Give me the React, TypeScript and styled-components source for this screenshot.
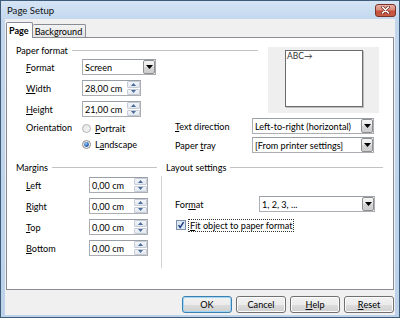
import React from "react";
import styled, { createGlobalStyle } from "styled-components";

const Global = createGlobalStyle`
  html, body { margin: 0; padding: 0; background: #ffffff; }
  body {
    font-family: Lato, "Noto Sans", "DejaVu Sans", sans-serif;
    font-size: 9.1px;
    color: #000;
  }
  * { box-sizing: border-box; }
  #root { width: 400px; height: 319px; }
`;

const Window = styled.div`
  width: 400px;
  height: 318px;
  border: 1px solid #3e5b7a;
  background: linear-gradient(to bottom, #d6e5f5 0px, #c2d7ee 19px, #bcd2ea 100%);
  display: flex;
  flex-direction: column;
  padding: 0 4px 2px 4px;
`;

const TitleBar = styled.div`
  height: 18px;
  display: flex;
  align-items: center;
  justify-content: space-between;
  padding-left: 2px;
`;

const Title = styled.span`
  font-size: 9.6px;
  color: #111;
`;

const CloseBtn = styled.div`
  width: 21px;
  height: 13px;
  margin-right: -1px;
  border: 1px solid #7a3328;
  border-radius: 3px;
  background: linear-gradient(to bottom, #e9b2a6 0%, #d98a79 45%, #c7503b 55%, #c65c45 100%);
  display: flex;
  align-items: center;
  justify-content: center;
`;

const Client = styled.div`
  flex: 1;
  background: #f0f0f0;
  display: flex;
  flex-direction: column;
  padding: 3px 1px 2px 1px;
`;

const TabStrip = styled.div`
  height: 15px;
  display: flex;
  align-items: flex-end;
`;

const Tab = styled.div<{ $active?: boolean }>`
  height: ${(p) => (p.$active ? 16 : 13)}px;
  margin-bottom: ${(p) => (p.$active ? -1 : 0)}px;
  padding: 0 ${(p) => (p.$active ? 3 : 3)}px 0 2px;
  border: 1px solid #898c95;
  border-bottom: none;
  border-left: ${(p) => (p.$active ? "1px solid #898c95" : "none")};
  border-radius: 2px 2px 0 0;
  background: ${(p) =>
    p.$active ? "#ffffff" : "linear-gradient(to bottom, #f3f3f3, #e4e4e4)"};
  font-weight: ${(p) => (p.$active ? 700 : 400)};
  display: flex;
  align-items: center;
  position: relative;
  z-index: ${(p) => (p.$active ? 1 : 0)};
`;

const Panel = styled.div`
  flex: 1;
  border: 1px solid #898c95;
  background: #ffffff;
  padding: 6px 9px 0 9px;
  display: flex;
  flex-direction: column;
`;

const TopRow = styled.div`
  display: flex;
  align-items: flex-start;
`;

const LeftCol = styled.div`
  width: 252px;
  display: flex;
  flex-direction: column;
`;

const SectionHead = styled.div<{ $w: number; $indent?: number }>`
  width: ${(p) => p.$w}px;
  height: 12px;
  padding-left: ${(p) => p.$indent ?? 0}px;
  display: flex;
  align-items: center;
  gap: 4px;
  white-space: nowrap;
  &::after {
    content: "";
    flex: 1;
    height: 1px;
    background: #c3c3c3;
  }
`;

const FormRow = styled.div<{ $mt: number; $indent?: number }>`
  display: flex;
  align-items: center;
  height: 16px;
  margin-top: ${(p) => p.$mt}px;
  padding-left: ${(p) => p.$indent ?? 10}px;
`;

const Label = styled.span<{ $w: number }>`
  width: ${(p) => p.$w}px;
  flex: none;
  white-space: nowrap;
`;

const Field = styled.div<{ $w: number }>`
  width: ${(p) => p.$w}px;
  height: 16px;
  flex: none;
  background: #fff;
  border: 1px solid #abadb3;
  border-top-color: #9a9ea6;
  display: flex;
  align-items: stretch;
`;

const FieldText = styled.span`
  flex: 1;
  padding-left: 2px;
  display: flex;
  align-items: center;
  white-space: nowrap;
  overflow: hidden;
`;

const DropBtn = styled.div`
  width: 12px;
  border: 1px solid #8e8f8f;
  border-radius: 2px;
  background: linear-gradient(to bottom, #f4f4f4 0%, #e8e8e8 50%, #d6d6d6 51%, #cdcdcd 100%);
  display: flex;
  align-items: center;
  justify-content: center;
`;

const SpinCol = styled.div`
  width: 13px;
  display: flex;
  flex-direction: column;
  gap: 1px;
`;

const SpinBtn = styled.div`
  flex: 1;
  border: 1px solid #c5ccd6;
  border-radius: 1px;
  background: linear-gradient(to bottom, #f3f6fa, #e2e8f0);
  display: flex;
  align-items: center;
  justify-content: center;
`;

const Preview = styled.div`
  margin-top: 3px;
  width: 111px;
  height: 66px;
  background: #efefef;
  padding: 3px 0 0 17px;
`;

const PreviewPage = styled.div`
  width: 78px;
  height: 57px;
  border: 1px solid #6b6b6b;
  box-shadow: 1px 1px 0 #bdbdbd;
  background: #fff;
  font-size: 8.5px;
  line-height: 11px;
  padding-left: 1px;
  color: #333;
`;

const MidRow = styled.div`
  display: flex;
  align-items: flex-start;
  margin-top: 1px;
`;

const OrientCol = styled.div`
  width: 159px;
  display: flex;
  padding: 2px 0 0 10px;
`;

const OrientLabel = styled(Label)`
  line-height: 16px;
`;

const RadioList = styled.div`
  display: flex;
  flex-direction: column;
`;

const RadioRow = styled.div`
  height: 16px;
  display: flex;
  align-items: center;
  gap: 4px;
`;

const TextCol = styled.div`
  display: flex;
  flex-direction: column;
  gap: 3px;
`;

const PlainRow = styled.div`
  display: flex;
  align-items: center;
  height: 16px;
`;

const LowerRow = styled.div`
  display: flex;
  align-items: flex-start;
  margin-top: 8px;
`;

const MarginsCol = styled.div`
  width: 141px;
  display: flex;
  flex-direction: column;
`;

const LayoutCol = styled.div`
  width: 222px;
  margin-left: 4px;
  display: flex;
  flex-direction: column;
`;

const LayoutBody = styled.div`
  margin-top: 3px;
  height: 92px;
  border-left: 1px solid #d2d2d2;
  padding: 20px 0 0 13px;
  display: flex;
  flex-direction: column;
`;

const CheckRow = styled.div`
  margin-top: 6px;
  height: 14px;
  display: flex;
  align-items: center;
  padding-left: 1px;
  gap: 2px;
`;

const FocusLabel = styled.span`
  border: 1px dotted #333;
  padding: 0 1px;
  line-height: 11px;
  white-space: nowrap;
`;

const ButtonRow = styled.div`
  display: flex;
  justify-content: flex-end;
  gap: 4px;
  margin-top: 6px;
`;

const Button = styled.div<{ $default?: boolean }>`
  width: 50px;
  height: 17px;
  border: 1px solid ${(p) => (p.$default ? "#3c7fb1" : "#707070")};
  border-radius: 3px;
  background: linear-gradient(to bottom, #f2f2f2 0%, #ebebeb 50%, #dddddd 51%, #cfcfcf 100%);
  box-shadow: ${(p) => (p.$default ? "inset 0 0 0 1px #9fd5f5" : "inset 0 0 0 1px #fcfcfc")};
  display: flex;
  align-items: center;
  justify-content: center;
`;

const U = styled.u`
  text-decoration-thickness: 1px;
  text-underline-offset: 1px;
`;

const DownArrow = () => (
  <svg width="7" height="4" viewBox="0 0 7 4">
    <path d="M0 0 H7 L3.5 4 Z" fill="#000" />
  </svg>
);

const SpinArrow = ({ up }: { up?: boolean }) => (
  <svg width="5" height="3" viewBox="0 0 5 3">
    <path d={up ? "M0 3 H5 L2.5 0 Z" : "M0 0 H5 L2.5 3 Z"} fill="#4b6b9b" />
  </svg>
);

const Radio = ({ checked }: { checked?: boolean }) => (
  <svg width="9" height="9" viewBox="0 0 9 9">
    <defs>
      <linearGradient id="rg" x1="0" y1="0" x2="1" y2="1">
        <stop offset="0" stopColor="#e4e4e4" />
        <stop offset="1" stopColor="#f9f9f9" />
      </linearGradient>
      <radialGradient id="rdot" cx="0.4" cy="0.35" r="0.7">
        <stop offset="0" stopColor="#a8d0f5" />
        <stop offset="0.6" stopColor="#2f72c2" />
        <stop offset="1" stopColor="#163f80" />
      </radialGradient>
    </defs>
    <circle cx="4.5" cy="4.5" r="4" fill="url(#rg)" stroke={checked ? "#8d8d8d" : "#b4b4b4"} strokeWidth="1" />
    {checked && <circle cx="4.5" cy="4.5" r="2.4" fill="url(#rdot)" />}
  </svg>
);

const Checkbox = () => (
  <svg width="10" height="10" viewBox="0 0 10 10">
    <rect x="0.5" y="0.5" width="9" height="9" fill="#dde8f5" stroke="#7d8ea6" />
    <path d="M2.5 5.2 L4.2 7.5 L7.6 2.2" fill="none" stroke="#1b3a7e" strokeWidth="1.4" />
  </svg>
);

const CloseX = () => (
  <svg width="9" height="8" viewBox="0 0 9 8">
    <path d="M1.5 1 L7.5 7 M7.5 1 L1.5 7" stroke="#6e2a20" strokeWidth="3" strokeLinecap="round" />
    <path d="M1.5 1 L7.5 7 M7.5 1 L1.5 7" stroke="#ffffff" strokeWidth="1.6" strokeLinecap="round" />
  </svg>
);

const Select = ({ w, value }: { w: number; value: string }) => (
  <Field $w={w}>
    <FieldText>{value}</FieldText>
    <DropBtn>
      <DownArrow />
    </DropBtn>
  </Field>
);

const Spin = ({ w, value }: { w: number; value: string }) => (
  <Field $w={w}>
    <FieldText>{value}</FieldText>
    <SpinCol>
      <SpinBtn>
        <SpinArrow up />
      </SpinBtn>
      <SpinBtn>
        <SpinArrow />
      </SpinBtn>
    </SpinCol>
  </Field>
);

export default function App() {
  return (
    <>
      <Global />
      <Window>
        <TitleBar>
          <Title>Page Setup</Title>
          <CloseBtn>
            <CloseX />
          </CloseBtn>
        </TitleBar>
        <Client>
          <TabStrip>
            <Tab $active>Page</Tab>
            <Tab>Background</Tab>
          </TabStrip>
          <Panel>
            <TopRow>
              <LeftCol>
                <SectionHead $w={242}>Paper format</SectionHead>
                <FormRow $mt={3}>
                  <Label $w={56}>
                    <U>F</U>ormat
                  </Label>
                  <Select w={74} value="Screen" />
                </FormRow>
                <FormRow $mt={5}>
                  <Label $w={56}>
                    <U>W</U>idth
                  </Label>
                  <Spin w={59} value="28,00 cm" />
                </FormRow>
                <FormRow $mt={5}>
                  <Label $w={56}>
                    <U>H</U>eight
                  </Label>
                  <Spin w={59} value="21,00 cm" />
                </FormRow>
              </LeftCol>
              <Preview>
                <PreviewPage>ABC→</PreviewPage>
              </Preview>
            </TopRow>
            <MidRow>
              <OrientCol>
                <OrientLabel $w={56}>Orientation</OrientLabel>
                <RadioList>
                  <RadioRow>
                    <Radio />
                    <span>
                      <U>P</U>ortrait
                    </span>
                  </RadioRow>
                  <RadioRow>
                    <Radio checked />
                    <span>
                      L<U>a</U>ndscape
                    </span>
                  </RadioRow>
                </RadioList>
              </OrientCol>
              <TextCol>
                <PlainRow>
                  <Label $w={77}>
                    <U>T</U>ext direction
                  </Label>
                  <Select w={122} value="Left-to-right (horizontal)" />
                </PlainRow>
                <PlainRow>
                  <Label $w={77}>
                    Paper <U>t</U>ray
                  </Label>
                  <Select w={122} value="[From printer settings]" />
                </PlainRow>
              </TextCol>
            </MidRow>
            <LowerRow>
              <MarginsCol>
                <SectionHead $w={141}>Margins</SectionHead>
                <FormRow $mt={4}>
                  <Label $w={63}>
                    <U>L</U>eft
                  </Label>
                  <Spin w={59} value="0,00 cm" />
                </FormRow>
                <FormRow $mt={5}>
                  <Label $w={63}>
                    <U>R</U>ight
                  </Label>
                  <Spin w={59} value="0,00 cm" />
                </FormRow>
                <FormRow $mt={5}>
                  <Label $w={63}>
                    <U>T</U>op
                  </Label>
                  <Spin w={59} value="0,00 cm" />
                </FormRow>
                <FormRow $mt={5}>
                  <Label $w={63}>
                    <U>B</U>ottom
                  </Label>
                  <Spin w={59} value="0,00 cm" />
                </FormRow>
              </MarginsCol>
              <LayoutCol>
                <SectionHead $w={222} $indent={5}>
                  Layout settings
                </SectionHead>
                <LayoutBody>
                  <PlainRow>
                    <Label $w={84}>
                      For<U>m</U>at
                    </Label>
                    <Select w={116} value="1, 2, 3, ..." />
                  </PlainRow>
                  <CheckRow>
                    <Checkbox />
                    <FocusLabel>
                      <U>F</U>it object to paper format
                    </FocusLabel>
                  </CheckRow>
                </LayoutBody>
              </LayoutCol>
            </LowerRow>
          </Panel>
          <ButtonRow>
            <Button $default>OK</Button>
            <Button>Cancel</Button>
            <Button>
              <U>H</U>elp
            </Button>
            <Button>
              <U>R</U>eset
            </Button>
          </ButtonRow>
        </Client>
      </Window>
    </>
  );
}
